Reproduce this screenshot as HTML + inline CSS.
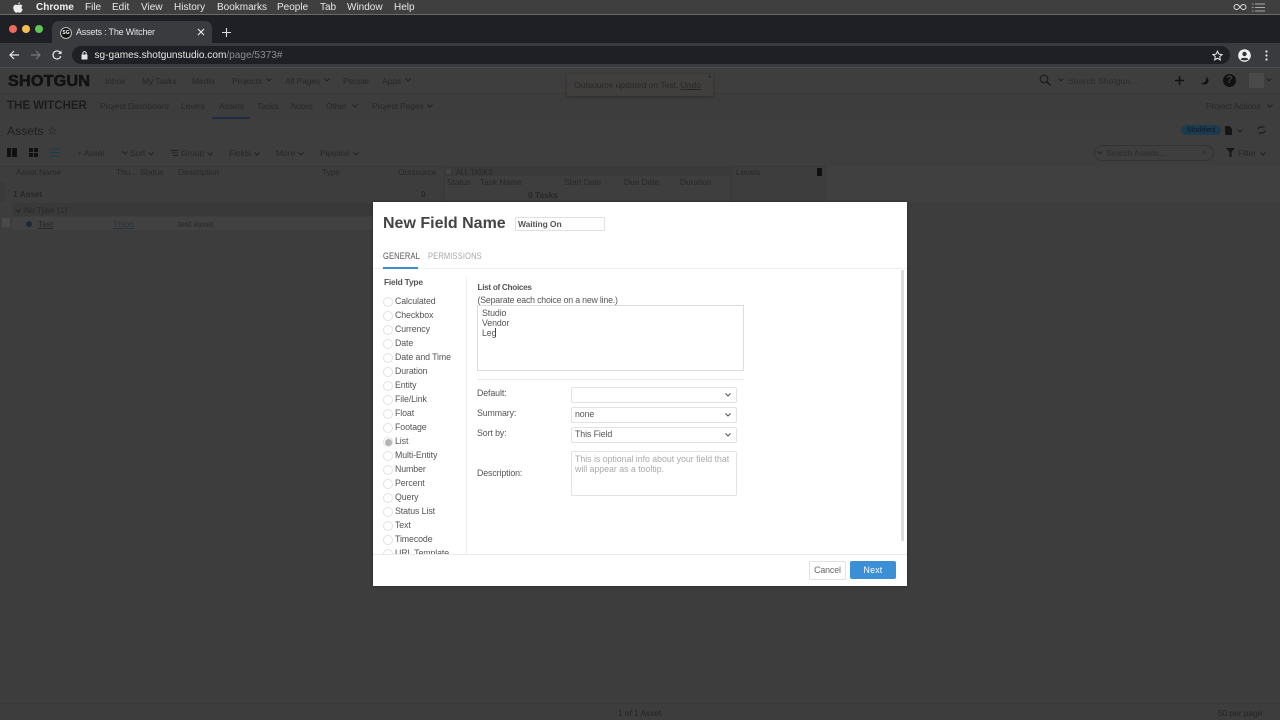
<!DOCTYPE html>
<html><head><meta charset="utf-8">
<style>
html,body{margin:0;padding:0;width:1280px;height:720px;overflow:hidden;background:#3d3d3d;font-family:"Liberation Sans",sans-serif}
.a{position:absolute;white-space:nowrap;line-height:1}
.m{color:#e8e8e8;font-size:10px;line-height:10px;top:3px}
.n{color:#282828;font-size:8.5px;letter-spacing:-.1px}
.r{position:absolute;left:383px;width:10px;height:10px;box-sizing:border-box;border:1px solid #e2e2e2;border-radius:50%;background:#fff}
.f{color:#555;font-size:8.8px;left:395px;letter-spacing:-.1px}
.s{position:absolute;left:571px;width:164px;height:14px;border:1px solid #e2e2e2;border-radius:2px;background:#fff}
.l{color:#555;font-size:8.8px;left:477px;letter-spacing:-.1px}
svg{position:absolute;overflow:visible}
</style></head>
<body>
<div style="position:absolute;inset:0;width:1280px;height:720px;overflow:hidden">
<!-- mac menu bar -->
<div style="position:absolute;left:0;top:0;width:1280px;height:14px;background:#3f3f3f"></div>
<div style="position:absolute;left:0;top:14px;width:1280px;height:1px;background:#6a6a6a"></div>
<svg style="left:13px;top:2px" width="10" height="11" viewBox="0 0 10 11"><path d="M7 0.2C6 .4 5.1 1.3 5.2 2.4 6.3 2.4 7.1 1.3 7 .2ZM5 3C4.300 3 3.800 2.600 3 2.600 1.500 2.700.3 3.900.3 5.800.3 8 1.900 10.700 3.200 10.700 3.900 10.700 4.300 10.200 5.100 10.200 5.900 10.200 6.200 10.700 7 10.700 8.200 10.700 9.300 8.700 9.700 7.500 8.500 7 7.900 5 9.500 3.800 8.900 2.900 7.900 2.600 7.200 2.600 6.200 2.600 5.600 3 5 3Z" fill="#eee"/></svg>
<div class="a m" style="left:36px;font-weight:bold;color:#f0f0f0">Chrome</div>
<div class="a m" style="left:85px">File</div>
<div class="a m" style="left:112px">Edit</div>
<div class="a m" style="left:141px">View</div>
<div class="a m" style="left:174px">History</div>
<div class="a m" style="left:217px">Bookmarks</div>
<div class="a m" style="left:277px">People</div>
<div class="a m" style="left:320px">Tab</div>
<div class="a m" style="left:347px">Window</div>
<div class="a m" style="left:394px">Help</div>
<svg style="left:1233px;top:3px" width="14" height="8" viewBox="0 0 14 8"><path d="M4 1.500C2 1.500 1 2.700 1 4S2 6.500 4 6.500C6 6.500 8 1.500 10 1.500 12 1.500 13 2.700 13 4S12 6.500 10 6.500C8 6.500 6 1.500 4 1.500Z" fill="none" stroke="#ddd" stroke-width="1"/></svg>
<svg style="left:1252px;top:3px" width="13" height="9" viewBox="0 0 13 9"><path d="M0 1H1.500M3 1H13M0 4.500H1.500M3 4.500H13M0 8H1.500M3 8H13" stroke="#aaa" stroke-width="1"/></svg>

<!-- tab strip -->
<div style="position:absolute;left:0;top:15px;width:1280px;height:28px;background:#1f2025"></div>
<div style="position:absolute;left:0;top:43px;width:1280px;height:24px;background:#3a3b3f"></div>
<div style="position:absolute;left:52px;top:21px;width:160px;height:24px;background:#3a3b3f;border-radius:7px 7px 0 0"></div>
<div style="position:absolute;left:9px;top:25px;width:8px;height:8px;border-radius:50%;background:#ed6a5e"></div>
<div style="position:absolute;left:22px;top:25px;width:8px;height:8px;border-radius:50%;background:#f4bf4f"></div>
<div style="position:absolute;left:35px;top:25px;width:8px;height:8px;border-radius:50%;background:#61c554"></div>
<div style="position:absolute;left:60px;top:27px;width:10px;height:10px;border-radius:50%;background:#111;border:.5px solid #bbb;color:#fff;font-size:5px;line-height:10px;text-align:center;font-weight:bold">SG</div>
<div class="a" style="left:76px;top:28px;font-size:9px;letter-spacing:-.2px;color:#e4e4e4">Assets : The Witcher</div>
<svg style="left:197px;top:28px" width="8" height="8" viewBox="0 0 8 8"><path d="M1 1L7 7M7 1L1 7" stroke="#e8e8e8" stroke-width="1.200"/></svg>
<svg style="left:222px;top:28px" width="9" height="9" viewBox="0 0 9 9"><path d="M4.500 0V9M0 4.500H9" stroke="#ddd" stroke-width="1.100"/></svg>

<!-- address bar -->
<svg style="left:9px;top:50px" width="10" height="10" viewBox="0 0 10 10"><path d="M10 5H1M5 1L1 5L5 9" fill="none" stroke="#e8e8e8" stroke-width="1.200"/></svg>
<svg style="left:31px;top:50px" width="10" height="10" viewBox="0 0 10 10"><path d="M0 5H9M5 1L9 5L5 9" fill="none" stroke="#75767a" stroke-width="1.200"/></svg>
<svg style="left:52px;top:50px" width="10" height="10" viewBox="0 0 10 10"><path d="M8.800 6.200A4 4 0 1 1 8 2.300" fill="none" stroke="#e8e8e8" stroke-width="1.200"/><path d="M9.500 .5V4H6Z" fill="#e8e8e8"/></svg>
<div style="position:absolute;left:72px;top:46px;width:1158px;height:18px;border-radius:9px;background:#1f2025"></div>
<svg style="left:81px;top:51px" width="7" height="9" viewBox="0 0 7 9"><rect x="0.500" y="3.500" width="6" height="5" rx=".5" fill="#e4e4e4"/><path d="M1.800 3.800V2.300A1.700 1.700 0 0 1 5.200 2.300V3.800" fill="none" stroke="#e4e4e4"/></svg>
<div class="a" style="left:94.500px;top:51px;font-size:10.100px"><span style="color:#e8e8e8">sg-games.shotgunstudio.com</span><span style="color:#8d8e91">/page/5373#</span></div>
<svg style="left:1212px;top:50px" width="11" height="11" viewBox="0 0 24 24"><path d="M12 2.500L15 9L22 9.800L16.800 14.500L18.200 21.500L12 18L5.800 21.500L7.200 14.500L2 9.800L9 9Z" fill="none" stroke="#e8e8e8" stroke-width="2.200"/></svg>
<svg style="left:1238px;top:49px" width="13" height="13" viewBox="0 0 13 13"><circle cx="6.500" cy="6.500" r="6.300" fill="#f0f0f0"/><circle cx="6.500" cy="5" r="2.200" fill="#333"/><path d="M2.500 10.200C3.500 8.200 9.500 8.200 10.500 10.200 9 11.800 4 11.800 2.500 10.200Z" fill="#333"/></svg>
<svg style="left:1265px;top:50px" width="3" height="11" viewBox="0 0 3 11"><circle cx="1.500" cy="1.500" r="1.100" fill="#e8e8e8"/><circle cx="1.500" cy="5.500" r="1.100" fill="#e8e8e8"/><circle cx="1.500" cy="9.500" r="1.100" fill="#e8e8e8"/></svg>

<!-- dimmed app -->
<div style="position:absolute;left:0;top:67px;width:1280px;height:653px;background:#3d3d3d"></div>
<div style="position:absolute;left:0;top:67px;width:1280px;height:1px;background:#4b4c4f"></div>
<div style="position:absolute;left:0;top:68px;width:1280px;height:25px;background:#3e3e3e"></div>
<div style="position:absolute;left:0;top:93px;width:1280px;height:1px;background:#393939"></div>
<div style="position:absolute;left:0;top:94px;width:1280px;height:26px;background:#3d3d3d"></div>
<div style="position:absolute;left:0;top:120px;width:1280px;height:46px;background:#3e3e3e"></div>
<div style="position:absolute;left:0;top:166px;width:1280px;height:1px;background:#383838"></div>

<div class="a" style="left:8px;top:74px;font-size:15.500px;font-weight:bold;color:#121212;letter-spacing:.1px;-webkit-text-stroke:.5px #121212;transform:scaleX(1.050);transform-origin:left">SHOTGUN</div>
<div class="a n" style="left:105px;top:77px">Inbox</div>
<div class="a n" style="left:142px;top:77px">My Tasks</div>
<div class="a n" style="left:192px;top:77px">Media</div>
<div class="a n" style="left:232px;top:77px">Projects</div>
<svg style="left:266px;top:78px" width="6" height="4" viewBox="0 0 6 4"><path d="M.5.500L3 3L5.500.5" fill="none" stroke="#222"/></svg>
<div class="a n" style="left:285px;top:77px">All Pages</div>
<svg style="left:324px;top:78px" width="6" height="4" viewBox="0 0 6 4"><path d="M.5.500L3 3L5.500.5" fill="none" stroke="#222"/></svg>
<div class="a n" style="left:343px;top:77px">People</div>
<div class="a n" style="left:382px;top:77px">Apps</div>
<svg style="left:405px;top:78px" width="6" height="4" viewBox="0 0 6 4"><path d="M.5.500L3 3L5.500.5" fill="none" stroke="#222"/></svg>

<div class="a" style="left:7px;top:101px;font-size:11.500px;font-weight:bold;color:#1c1c1c">THE WITCHER</div>
<div class="a n" style="left:100px;top:102px">Project Dashboard</div>
<div class="a n" style="left:181px;top:102px">Levels</div>
<div class="a n" style="left:219px;top:102px">Assets</div>
<div style="position:absolute;left:212px;top:117px;width:38px;height:2px;background:#1f2d44"></div>
<div class="a n" style="left:257px;top:102px">Tasks</div>
<div class="a n" style="left:291px;top:102px">Notes</div>
<div class="a n" style="left:326px;top:102px">Other</div>
<svg style="left:352px;top:104px" width="6" height="4" viewBox="0 0 6 4"><path d="M.5.500L3 3L5.500.5" fill="none" stroke="#222"/></svg>
<div class="a n" style="left:372px;top:102px">Project Pages</div>
<svg style="left:427px;top:104px" width="6" height="4" viewBox="0 0 6 4"><path d="M.5.500L3 3L5.500.5" fill="none" stroke="#222"/></svg>

<!-- toast -->
<div style="position:absolute;left:567px;top:74px;width:146px;height:22px;background:#413f3d;box-shadow:0 1px 3px rgba(0,0,0,.3)"></div>
<div class="a n" style="left:574px;top:81px;letter-spacing:0">Outsource updated on Test. <span style="text-decoration:underline">Undo</span></div>
<div class="a" style="left:708px;top:75px;font-size:6px;color:#222">×</div>

<!-- top right -->
<svg style="left:1039px;top:74px" width="12" height="12" viewBox="0 0 12 12"><circle cx="5" cy="5" r="3.800" fill="none" stroke="#1b1b1b" stroke-width="1.100"/><path d="M8 8L11.500 11.500" stroke="#1b1b1b" stroke-width="1.500"/></svg>
<svg style="left:1058px;top:78px" width="6" height="4" viewBox="0 0 6 4"><path d="M.5.500L3 3L5.500.5" fill="none" stroke="#222"/></svg>
<div class="a n" style="left:1068px;top:77px;color:#2c2c2c;letter-spacing:.1px">Search Shotgun...</div>
<svg style="left:1175px;top:76px" width="9" height="9" viewBox="0 0 9 9"><path d="M4.500 0V9M0 4.500H9" stroke="#111" stroke-width="1.500"/></svg>
<svg style="left:1200px;top:76px" width="9" height="9" viewBox="0 0 9 9"><path d="M6 1C7 5 5 7 1 7C3 9.500 8.500 9 8.500 4.500C8.500 3 7.500 1.500 6 1Z" fill="#111"/></svg>
<div style="position:absolute;left:1223px;top:74px;width:13px;height:13px;border-radius:50%;background:#111;color:#3e3e3e;font-size:11px;font-weight:bold;line-height:13px;text-align:center">?</div>
<div style="position:absolute;left:1249px;top:73px;width:15px;height:15px;background:#4a4a4a"></div>
<svg style="left:1266px;top:78px" width="6" height="4" viewBox="0 0 6 4"><path d="M.5.500L3 3L5.500.5" fill="none" stroke="#222"/></svg>
<div class="a n" style="left:1206px;top:102px">Project Actions</div>
<svg style="left:1267px;top:104px" width="6" height="4" viewBox="0 0 6 4"><path d="M.5.500L3 3L5.500.5" fill="none" stroke="#222"/></svg>

<!-- assets header -->
<div class="a" style="left:7px;top:125px;font-size:12px;color:#1f1f1f;letter-spacing:.1px">Assets</div>
<svg style="left:48px;top:126px" width="9" height="9" viewBox="0 0 24 24"><path d="M12 2.500L15 9L22 9.800L16.800 14.500L18.200 21.500L12 18L5.800 21.500L7.200 14.500L2 9.800L9 9Z" fill="none" stroke="#2d2d2d" stroke-width="2"/></svg>
<div style="position:absolute;left:1181px;top:125px;width:40px;height:10px;border-radius:5px;background:#1d3a4f"></div>
<div class="a" style="left:1187px;top:126px;font-size:7.500px;color:#0e1c2a">Modified</div>
<svg style="left:1225px;top:126px" width="7" height="9" viewBox="0 0 7 9"><path d="M0 0H4.500L7 2.500V9H0Z" fill="#151515"/></svg>
<svg style="left:1237px;top:129px" width="6" height="4" viewBox="0 0 6 4"><path d="M.5.500L3 3L5.500.5" fill="none" stroke="#222"/></svg>
<svg style="left:1257px;top:125px" width="9" height="10" viewBox="0 0 9 10"><path d="M1 4.500C1 2.500 3 1.500 7.500 2M8 5.500C8 7.500 6 8.500 1.500 8" fill="none" stroke="#1c1c1c" stroke-width="1.200"/></svg>

<!-- toolbar -->
<div style="position:absolute;left:7px;top:148px;width:4px;height:9px;background:#111"></div><div style="position:absolute;left:12px;top:148px;width:5px;height:9px;background:#111"></div>
<div style="position:absolute;left:29px;top:148px;width:9px;height:9px;background:repeating-linear-gradient(90deg,#111 0 4px,transparent 4px 5px)"></div>
<div style="position:absolute;left:29px;top:152px;width:9px;height:1px;background:#3e3e3e"></div>
<svg style="left:50px;top:148px" width="10" height="9" viewBox="0 0 10 9"><path d="M0 1H10M0 4.500H10M0 8H10" stroke="#1f3b50" stroke-width="1.100"/></svg>
<div class="a n" style="left:77px;top:149px">+ Asset</div>
<svg style="left:122px;top:151px" width="6" height="4" viewBox="0 0 6 4"><path d="M.5.500L3 3L5.500.5" fill="none" stroke="#222"/></svg>
<div class="a n" style="left:130px;top:149px">Sort</div>
<svg style="left:148px;top:152px" width="6" height="4" viewBox="0 0 6 4"><path d="M.5.500L3 3L5.500.5" fill="none" stroke="#222"/></svg>
<svg style="left:170px;top:150px" width="8" height="6" viewBox="0 0 8 6"><path d="M0 .5H8M2 3H8M3 5.500H8" stroke="#222"/></svg>
<div class="a n" style="left:181px;top:149px">Group</div>
<svg style="left:207px;top:152px" width="6" height="4" viewBox="0 0 6 4"><path d="M.5.500L3 3L5.500.5" fill="none" stroke="#222"/></svg>
<div class="a n" style="left:229px;top:149px">Fields</div>
<svg style="left:254px;top:152px" width="6" height="4" viewBox="0 0 6 4"><path d="M.5.500L3 3L5.500.5" fill="none" stroke="#222"/></svg>
<div class="a n" style="left:276px;top:149px">More</div>
<svg style="left:298px;top:152px" width="6" height="4" viewBox="0 0 6 4"><path d="M.5.500L3 3L5.500.5" fill="none" stroke="#222"/></svg>
<div class="a n" style="left:320px;top:149px">Pipeline</div>
<svg style="left:353px;top:152px" width="6" height="4" viewBox="0 0 6 4"><path d="M.5.500L3 3L5.500.5" fill="none" stroke="#222"/></svg>
<div style="position:absolute;left:1094px;top:145px;width:118px;height:14px;border:1px solid #333;border-radius:8px;box-sizing:content-box"></div>
<svg style="left:1097px;top:151px" width="6" height="4" viewBox="0 0 6 4"><path d="M.5.500L3 3L5.500.5" fill="none" stroke="#222"/></svg>
<div class="a n" style="left:1106px;top:149px;color:#2c2c2c">Search Assets...</div>
<div class="a" style="left:1202px;top:148px;font-size:9px;color:#2d2d2d">×</div>
<svg style="left:1226px;top:148px" width="9" height="9" viewBox="0 0 9 9"><path d="M0 0H9L5.500 4V9H3.500V4Z" fill="#161616"/></svg>
<div class="a n" style="left:1238px;top:149px">Filter</div>
<svg style="left:1260px;top:152px" width="6" height="4" viewBox="0 0 6 4"><path d="M.5.500L3 3L5.500.5" fill="none" stroke="#222"/></svg>

<!-- table -->
<div class="a n" style="left:16px;top:168px">Asset Name</div>
<div class="a n" style="left:116px;top:168px">Thu...</div>
<div class="a n" style="left:140px;top:168px">Status</div>
<div class="a n" style="left:178px;top:168px">Description</div>
<div class="a n" style="left:322px;top:168px">Type</div>
<div class="a n" style="left:398px;top:168px">Outsource</div>
<div style="position:absolute;left:443px;top:166px;width:290px;height:36px;background:#3a3a3a"></div>
<div style="position:absolute;left:445px;top:176px;width:285px;height:26px;background:#3e3e3e"></div>
<div style="position:absolute;left:446px;top:169px;width:5px;height:5px;background:#444"></div>
<div class="a n" style="left:456px;top:168px;transform:scaleX(.85);transform-origin:left">ALL TASKS</div>
<div class="a n" style="left:447px;top:178px">Status</div>
<div class="a n" style="left:480px;top:178px">Task Name</div>
<div class="a n" style="left:564px;top:178px">Start Date</div>
<div class="a n" style="left:624px;top:178px">Due Date</div>
<div class="a n" style="left:680px;top:178px">Duration</div>
<div class="a n" style="left:528px;top:191px;font-weight:bold">0 Tasks</div>
<div class="a n" style="left:736px;top:168px">Levels</div>
<div style="position:absolute;left:817px;top:168px;width:5px;height:8px;background:#111"></div>
<div style="position:absolute;left:826px;top:166px;width:454px;height:36px;background:#404040"></div>
<div style="position:absolute;left:0;top:182px;width:5px;height:20px;background:#3a3a3a"></div>
<div class="a n" style="left:13px;top:190px;font-weight:bold">1 Asset</div>
<div class="a n" style="left:421px;top:190px;font-weight:bold">0</div>
<div style="position:absolute;left:12px;top:203px;width:361px;height:13px;background:#393939"></div>
<svg style="left:15px;top:209px" width="6" height="4" viewBox="0 0 6 4"><path d="M.5.500L3 3L5.500.5" fill="none" stroke="#222"/></svg>
<div class="a n" style="left:24px;top:206px">No Type (1)</div>
<div style="position:absolute;left:2px;top:218px;width:8px;height:9px;background:#4a4a4a"></div>
<div style="position:absolute;left:12px;top:217px;width:361px;height:13px;background:#414141"></div>
<div style="position:absolute;left:26px;top:221px;width:6px;height:6px;border-radius:50%;background:#1e2a33"></div>
<div class="a n" style="left:38px;top:220px;text-decoration:underline">Test</div>
<div class="a n" style="left:113px;top:220px;text-decoration:underline;color:#2b3340">Thibo</div>
<div class="a n" style="left:178px;top:220px">test asset</div>

<div class="a n" style="left:618px;top:709px;color:#242424">1 of 1 Asset</div>
<div class="a n" style="left:1218px;top:709px;color:#242424">50 per page</div>
<div style="position:absolute;left:0;top:703px;width:1280px;height:1px;background:#3a3a3a"></div>

<!-- dialog -->
<div style="position:absolute;left:373px;top:202px;width:534px;height:384px;background:#fff;box-shadow:0 0 3px rgba(0,0,0,.4)"></div>
<div class="a" style="left:383px;top:216px;font-size:16px;font-weight:bold;color:#444">New Field Name</div>
<div style="position:absolute;left:515px;top:217px;width:88px;height:12px;border:1px solid #e0e0e0;border-radius:1px"></div>
<div class="a" style="left:518px;top:220px;font-size:8.500px;font-weight:bold;color:#555;letter-spacing:-.1px">Waiting On</div>
<div class="a" style="left:383px;top:252px;font-size:8.800px;color:#555;letter-spacing:.2px;transform:scaleX(.85);transform-origin:left">GENERAL</div>
<div class="a" style="left:428px;top:252px;font-size:8.800px;color:#a8a8a8;letter-spacing:.2px;transform:scaleX(.85);transform-origin:left">PERMISSIONS</div>
<div style="position:absolute;left:373px;top:268px;width:534px;height:1px;background:#f0f0f0"></div>
<div style="position:absolute;left:383px;top:267px;width:35px;height:2px;background:#3a8fd1"></div>
<div style="position:absolute;left:466px;top:276px;width:1px;height:278px;background:#eeeeee"></div>
<div style="position:absolute;left:373px;top:554px;width:534px;height:1px;background:#eaeaea"></div>
<div style="position:absolute;left:901px;top:270px;width:3px;height:271px;background:#dcdcdc"></div>
<div class="a" style="left:384px;top:278px;font-size:8.400px;letter-spacing:-.2px;font-weight:bold;color:#555">Field Type</div>

<div style="position:absolute;left:373px;top:290px;width:93px;height:264px;overflow:hidden">
<div style="position:absolute;left:-373px;top:-290px;width:600px;height:600px">
<div class="r" style="top:297px"></div><div class="a f" style="top:296.500px">Calculated</div>
<div class="r" style="top:311px"></div><div class="a f" style="top:310.500px">Checkbox</div>
<div class="r" style="top:325px"></div><div class="a f" style="top:324.500px">Currency</div>
<div class="r" style="top:339px"></div><div class="a f" style="top:338.500px">Date</div>
<div class="r" style="top:353px"></div><div class="a f" style="top:352.500px">Date and Time</div>
<div class="r" style="top:367px"></div><div class="a f" style="top:366.500px">Duration</div>
<div class="r" style="top:381px"></div><div class="a f" style="top:380.500px">Entity</div>
<div class="r" style="top:395px"></div><div class="a f" style="top:394.500px">File/Link</div>
<div class="r" style="top:409px"></div><div class="a f" style="top:408.500px">Float</div>
<div class="r" style="top:423px"></div><div class="a f" style="top:422.500px">Footage</div>
<div class="r" style="top:437px"></div><div style="position:absolute;left:384.500px;top:438.500px;width:7px;height:7px;border-radius:50%;background:#b4b4b4"></div><div class="a f" style="top:436.500px">List</div>
<div class="r" style="top:451px"></div><div class="a f" style="top:450.500px">Multi-Entity</div>
<div class="r" style="top:465px"></div><div class="a f" style="top:464.500px">Number</div>
<div class="r" style="top:479px"></div><div class="a f" style="top:478.500px">Percent</div>
<div class="r" style="top:493px"></div><div class="a f" style="top:492.500px">Query</div>
<div class="r" style="top:507px"></div><div class="a f" style="top:506.500px">Status List</div>
<div class="r" style="top:521px"></div><div class="a f" style="top:520.500px">Text</div>
<div class="r" style="top:535px"></div><div class="a f" style="top:534.500px">Timecode</div>
<div class="r" style="top:549px"></div><div class="a f" style="top:548.500px">URL Template</div>
</div></div>

<div class="a" style="left:477.500px;top:284px;font-size:8.200px;letter-spacing:-.3px;font-weight:bold;color:#555">List of Choices</div>
<div class="a" style="left:477.500px;top:295.500px;font-size:8.800px;color:#555;letter-spacing:-.2px">(Separate each choice on a new line.)</div>
<div style="position:absolute;left:477px;top:305px;width:265px;height:64px;border:1px solid #dcdcdc"></div>
<div class="a l" style="left:482px;top:309px">Studio</div>
<div class="a l" style="left:482px;top:319px">Vendor</div>
<div class="a l" style="left:482px;top:329px">Leg</div>
<div style="position:absolute;left:495px;top:328px;width:1px;height:9px;background:#444"></div>
<div style="position:absolute;left:477px;top:379px;width:267px;height:1px;background:#eaeaea"></div>

<div class="a l" style="top:389px">Default:</div>
<div class="s" style="top:387px"></div>
<svg style="left:725px;top:393px" width="6" height="4" viewBox="0 0 6 4"><path d="M.5.500L3 3L5.500.5" fill="none" stroke="#555" stroke-width="1.100"/></svg>
<div class="a l" style="top:409px">Summary:</div>
<div class="s" style="top:407px"></div>
<div class="a l" style="left:575px;top:410px">none</div>
<svg style="left:725px;top:413px" width="6" height="4" viewBox="0 0 6 4"><path d="M.5.500L3 3L5.500.5" fill="none" stroke="#555" stroke-width="1.100"/></svg>
<div class="a l" style="top:429px">Sort by:</div>
<div class="s" style="top:427px"></div>
<div class="a l" style="left:575px;top:430px">This Field</div>
<svg style="left:725px;top:433px" width="6" height="4" viewBox="0 0 6 4"><path d="M.5.500L3 3L5.500.5" fill="none" stroke="#555" stroke-width="1.100"/></svg>
<div class="a l" style="top:469px">Description:</div>
<div style="position:absolute;left:571px;top:451px;width:164px;height:43px;border:1px solid #e2e2e2;border-radius:2px"></div>
<div class="a" style="left:575px;top:454px;font-size:8.800px;line-height:10px;color:#aaa;letter-spacing:-.02px">This is optional info about your field that<br>will appear as a tooltip.</div>

<div style="position:absolute;left:809px;top:561px;width:35px;height:17px;border:1px solid #e2e2e2;border-radius:2px;text-align:center;font-size:8.800px;line-height:17px;color:#666;letter-spacing:-.1px">Cancel</div>
<div style="position:absolute;left:850px;top:561px;width:46px;height:18px;background:#3a8fd6;border-radius:2px;text-align:center;font-size:8.800px;line-height:18px;color:#fff;letter-spacing:.2px">Next</div>
</div>
</body></html>
